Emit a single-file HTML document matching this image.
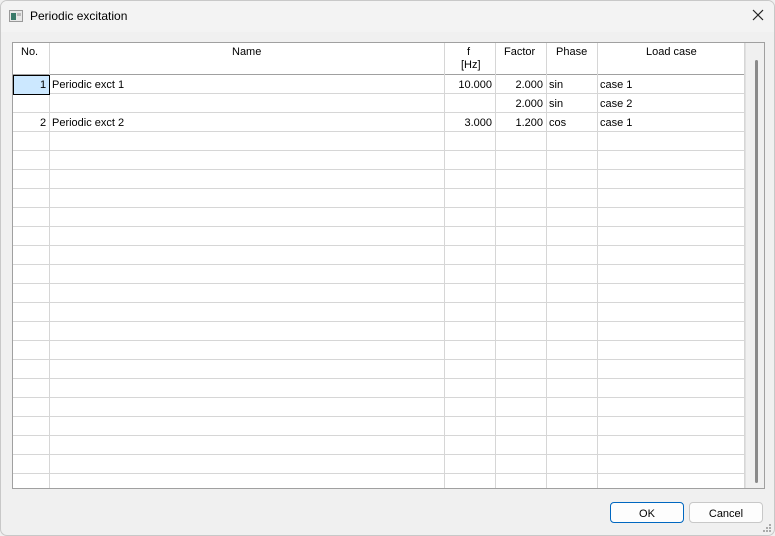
<!DOCTYPE html>
<html><head><style>
*{margin:0;padding:0;box-sizing:border-box}
body{width:775px;height:536px;background:#f0f0f0;font-family:"Liberation Sans",sans-serif;font-size:11px;color:#000;position:relative;overflow:hidden}
.win{position:absolute;left:0;top:0;width:775px;height:536px;border:1px solid #c8c8c8;border-radius:7px;background:#f0f0f0;overflow:hidden}
.title{position:absolute;left:0;top:0;width:775px;height:31px;background:#f3f3f3}
.title span{position:absolute;left:29px;top:8px;font-size:12px}
.close{position:absolute;left:751px;top:8px}
.grid{position:absolute;left:11px;top:41px;width:753px;height:447px;border:1px solid #a0a0a0;background:#fff;overflow:hidden}
.hdr{position:absolute;left:0;top:0;width:732px;height:32px;background:#fff;border-bottom:1px solid #a0a0a0}
.rows{position:absolute;left:0;top:32px;width:732px;height:420px;background:repeating-linear-gradient(to bottom,transparent 0,transparent 18px,#d6d6d6 18px,#d6d6d6 19px)}
.v{position:absolute;top:0;width:1px;height:447px;background:#d6d6d6}
.t{position:absolute;white-space:nowrap}
.r{position:absolute;white-space:nowrap;text-align:right;width:60px}
.sb{position:absolute;left:732px;top:0;width:20px;height:447px;background:#f0f0f0;border-left:1px solid #e0e0e0}
.thumb{position:absolute;left:9px;top:17px;width:3px;height:423px;background:#8a8a8a;border-radius:2px}
.btn{position:absolute;top:501px;width:74px;height:21px;border:1px solid #c8c8c8;border-radius:4px;background:#fdfdfd;text-align:center;line-height:22px;font-size:11px}
</style></head><body>
<div class="win">
<div class="title">
<svg style="position:absolute;left:8px;top:9px" width="14" height="12"><rect x="0.5" y="0.5" width="13" height="11" fill="#e8e8e8" stroke="#999"/><rect x="2" y="3" width="5" height="7" fill="#3a7a6a"/><rect x="8" y="3" width="4" height="3" fill="#bbb"/></svg>
<span>Periodic excitation</span>
<svg class="close" width="12" height="12"><path d="M1 1L11 11M11 1L1 11" stroke="#222" stroke-width="1.2"/></svg>
</div>
<div class="grid">
<div class="rows"></div>
<div class="hdr"></div>
<div class="v" style="left:36px"></div>
<div class="v" style="left:431px"></div>
<div class="v" style="left:482px"></div>
<div class="v" style="left:533px"></div>
<div class="v" style="left:584px"></div>
<div class="v" style="left:731px"></div>
<div style="position:absolute;left:0;top:32px;width:37px;height:20px;background:#cce8ff;border:1px solid #000"></div>
<div class="t" style="left:8px;top:3px">No.</div>
<div class="t" style="left:219px;top:3px">Name</div>
<div class="t" style="left:454px;top:3px">f</div>
<div class="t" style="left:448px;top:16px">[Hz]</div>
<div class="t" style="left:491px;top:3px">Factor</div>
<div class="t" style="left:543px;top:3px">Phase</div>
<div class="t" style="left:633px;top:3px">Load case</div>
<div class="t" style="left:27px;top:36px">1</div>
<div class="t" style="left:39px;top:36px">Periodic exct 1</div>
<div class="r" style="left:419px;top:36px">10.000</div>
<div class="r" style="left:470px;top:36px">2.000</div>
<div class="t" style="left:536px;top:36px">sin</div>
<div class="t" style="left:587px;top:36px">case 1</div>
<div class="r" style="left:470px;top:55px">2.000</div>
<div class="t" style="left:536px;top:55px">sin</div>
<div class="t" style="left:587px;top:55px">case 2</div>
<div class="t" style="left:27px;top:74px">2</div>
<div class="t" style="left:39px;top:74px">Periodic exct 2</div>
<div class="r" style="left:419px;top:74px">3.000</div>
<div class="r" style="left:470px;top:74px">1.200</div>
<div class="t" style="left:536px;top:74px">cos</div>
<div class="t" style="left:587px;top:74px">case 1</div>
<div class="sb"><div class="thumb"></div></div>
</div>
<div class="btn" style="left:609px;border:1px solid #0067c0">OK</div>
<div class="btn" style="left:688px">Cancel</div>
<svg style="position:absolute;left:760px;top:521px" width="12" height="12" fill="#aaa"><rect x="8" y="2" width="2" height="2"/><rect x="5" y="5" width="2" height="2"/><rect x="8" y="5" width="2" height="2"/><rect x="2" y="8" width="2" height="2"/><rect x="5" y="8" width="2" height="2"/><rect x="8" y="8" width="2" height="2"/></svg>
</div>
</body></html>
